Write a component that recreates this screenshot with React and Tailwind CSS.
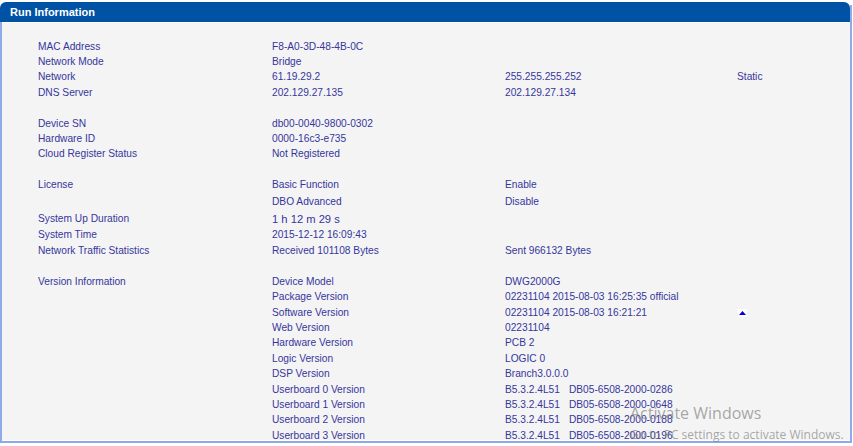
import React from "react";

const Up = () => (
  <span className="inline-flex items-center justify-center w-[9px] h-[8px] bg-white ml-[1px]">
    <svg width="7" height="4" viewBox="0 0 7 4">
      <path d="M3.5 0 L7 4 L0 4 Z" fill="#0000e0" />
    </svg>
  </span>
);

function Row({ h, cells }) {
  return (
    <div className={`grid grid-cols-[234px_233px_232px_1fr] ${h}`}>
      {[0, 1, 2, 3].map((i) => (
        <div key={i} className="flex items-center whitespace-nowrap">
          {cells && cells[i]}
        </div>
      ))}
    </div>
  );
}

const UB = ({ a, b }) => (
  <span>
    {a}
    <span className="ml-[9px]">{b}</span>
  </span>
);

export default function App() {
  const R = "h-[15.4px]";
  return (
    <div
      className="relative w-[853px] h-[446px] bg-white text-[#36369c] text-[10.2px] leading-none"
      style={{ fontFamily: '"Liberation Sans", Arial, sans-serif' }}
    >
      <div className="w-[852px] pt-[2px]">
        <div className="flex">
          <div className="w-[850px] h-[20px] rounded-t-[6px] bg-[#0052a5] flex items-center pl-[10px] text-white font-bold text-[11px]">
            Run Information
          </div>
          <div className="w-[2px] mt-[3px] bg-[#8eaaea]" />
        </div>
        <div className="border-l-2 border-r-2 border-b-2 border-[#8eaaea]">
          <div className="border-t border-b border-white bg-[#f4f4f4] pt-[16px] pl-[36px] h-[419px] overflow-hidden">
            <Row h={R} cells={["MAC Address", "F8-A0-3D-48-4B-0C"]} />
            <Row h={R} cells={["Network Mode", "Bridge"]} />
            <Row h={R} cells={["Network", "61.19.29.2", "255.255.255.252", "Static"]} />
            <Row h={R} cells={["DNS Server", "202.129.27.135", "202.129.27.134"]} />
            <Row h={R} />
            <Row h={R} cells={["Device SN", "db00-0040-9800-0302"]} />
            <Row h={R} cells={["Hardware ID", "0000-16c3-e735"]} />
            <Row h={R} cells={["Cloud Register Status", "Not Registered"]} />
            <Row h={R} />
            <Row h="h-[16px]" cells={["License", "Basic Function", "Enable"]} />
            <Row h="h-[18px]" cells={["", "DBO Advanced", "Disable"]} />
            <Row
              h="h-[16px]"
              cells={["System Up Duration", <span className="text-[11.2px]">1 h 12 m 29 s</span>]}
            />
            <Row h="h-[16px]" cells={["System Time", "2015-12-12 16:09:43"]} />
            <Row
              h={R}
              cells={["Network Traffic Statistics", "Received 101108 Bytes", "Sent 966132 Bytes"]}
            />
            <Row h={R} />
            <Row h={R} cells={["Version Information", "Device Model", "DWG2000G"]} />
            <Row h={R} cells={["", "Package Version", "02231104 2015-08-03 16:25:35 official"]} />
            <Row h={R} cells={["", "Software Version", "02231104 2015-08-03 16:21:21", <Up />]} />
            <Row h={R} cells={["", "Web Version", "02231104"]} />
            <Row h={R} cells={["", "Hardware Version", "PCB 2"]} />
            <Row h={R} cells={["", "Logic Version", "LOGIC 0"]} />
            <Row h={R} cells={["", "DSP Version", "Branch3.0.0.0"]} />
            <Row h={R} cells={["", "Userboard 0 Version", <UB a="B5.3.2.4L51" b="DB05-6508-2000-0286" />]} />
            <Row h={R} cells={["", "Userboard 1 Version", <UB a="B5.3.2.4L51" b="DB05-6508-2000-0648" />]} />
            <Row h={R} cells={["", "Userboard 2 Version", <UB a="B5.3.2.4L51" b="DB05-6508-2000-0188" />]} />
            <Row h={R} cells={["", "Userboard 3 Version", <UB a="B5.3.2.4L51" b="DB05-6508-2000-0196" />]} />
          </div>
        </div>
      </div>
      <div
        className="absolute left-[630px] top-[403px] text-[rgba(120,120,120,0.65)] pointer-events-none"
        style={{ fontFamily: '"Open Sans", "Noto Sans", sans-serif' }}
      >
        <div className="text-[16px] leading-[20px]">Activate Windows</div>
        <div className="text-[12px] leading-[16px] mt-[4px]">Go to PC settings to activate Windows.</div>
      </div>
    </div>
  );
}
